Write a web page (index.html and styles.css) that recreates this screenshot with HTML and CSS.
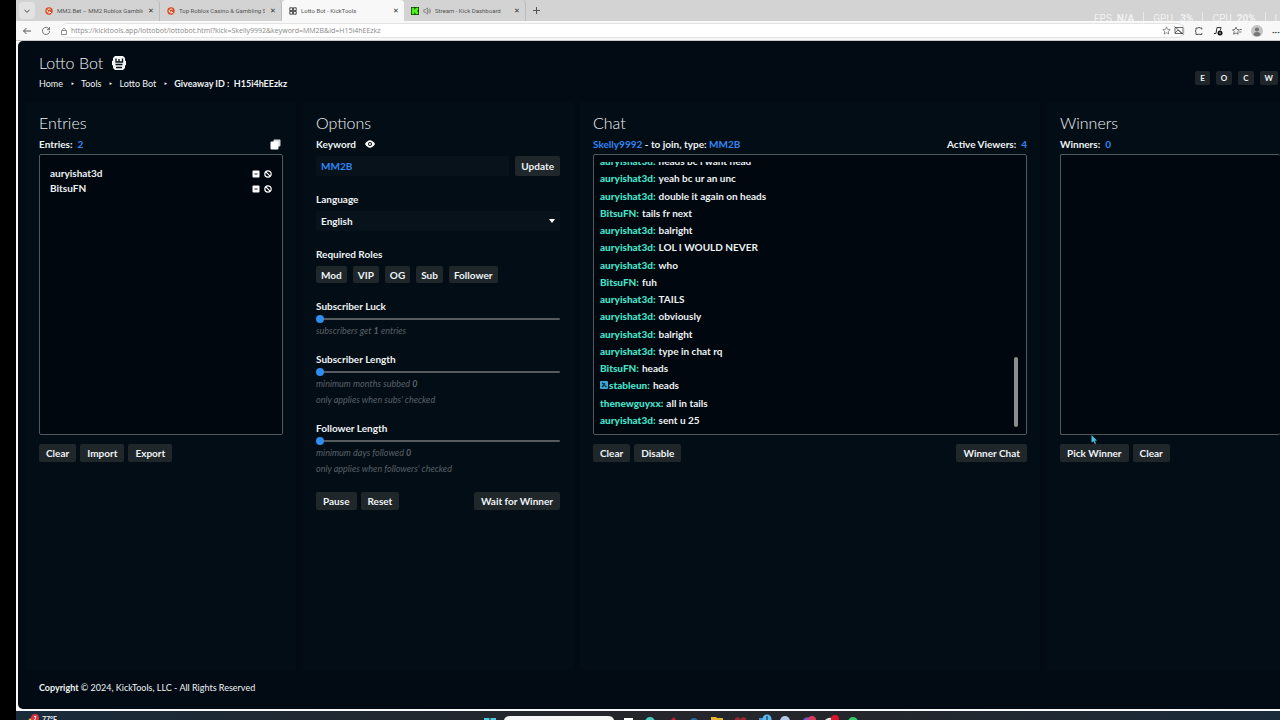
FILE: index.html
```html
<!DOCTYPE html>
<html lang="en">
<head>
    <meta charset="UTF-8">
    <meta name="viewport" content="width=device-width, initial-scale=1.0">
    <title>Lotto Bot - KickTools</title>
    <link rel="stylesheet" href="styles.css">
</head>
<body>

<div class="browser">
    <!-- Tabs -->
    <div class="tabs">
        <button class="tab-menu" aria-label="Tab menu"><svg width="8" height="8" viewBox="0 0 8 8"><path d="M1.5 3 4 5.3 6.5 3" fill="none" stroke="#444"/></svg></button>
        <div class="tab">
            <svg class="favicon" viewBox="0 0 10 10"><circle cx="5" cy="5" r="4.6" fill="#d8481e"/><path d="M7 3.4A2.4 2.4 0 1 0 6.5 7L5 5.2M6 6l2 2" fill="none" stroke="#fff" stroke-width="1.2"/></svg>
            <span class="tab-title">MM2.Bet – MM2 Roblox Gambling</span>
            <button class="tab-close" aria-label="Close">✕</button>
        </div>
        <div class="tab">
            <svg class="favicon" viewBox="0 0 10 10"><circle cx="5" cy="5" r="4.6" fill="#d8481e"/><path d="M7 3.4A2.4 2.4 0 1 0 6.5 7L5 5.2M6 6l2 2" fill="none" stroke="#fff" stroke-width="1.2"/></svg>
            <span class="tab-title">Top Roblox Casino &amp; Gambling Si</span>
            <button class="tab-close" aria-label="Close">✕</button>
        </div>
        <div class="tab active">
            <svg class="favicon" viewBox="0 0 10 10"><path d="M1 1h3.5v3.500H1zM5.500 1H9v3.500H5.500zM1 5.500h3.500V9H1zM5.500 5.500H9V9H5.500z" fill="#fff" stroke="#222"/></svg>
            <span class="tab-title">Lotto Bot - KickTools</span>
            <button class="tab-close" aria-label="Close">✕</button>
        </div>
        <div class="tab">
            <svg class="favicon" viewBox="0 0 10 10"><path fill="#123d0b" d="M0 0h10v10H0z"/><path d="M1 1h3v2h1V2h1V1h3v3H8v2h1v3H6V8H5V7H4v2H1z" fill="#4cf51c"/></svg>
            <svg class="favicon" viewBox="0 0 10 10"><path d="M1 3.500h2L5.500 1v8L3 6.500H1zM7 3q1.500 2 0 4M8.300 1.800q2 3.200 0 6.400" fill="none" stroke="#555" stroke-width=".7"/></svg>
            <span class="tab-title">Stream - Kick Dashboard</span>
            <button class="tab-close" aria-label="Close">✕</button>
        </div>
        <button class="tab-new" aria-label="New tab"><svg width="9" height="9" viewBox="0 0 9 9"><path d="M4.500 1v7M1 4.500h7" stroke="#555"/></svg></button>
    </div>

    <!-- Address bar -->
    <div class="toolbar">
        <button aria-label="Back"><svg width="10" height="10" viewBox="0 0 10 10"><path d="M9 5H1.500M4.500 2l-3 3 3 3" fill="none" stroke="#555"/></svg></button>
        <button aria-label="Reload"><svg width="10" height="10" viewBox="0 0 10 10"><path d="M8.300 3.500A3.600 3.600 0 1 0 8.600 5M8.500 1.200v2.500H6" fill="none" stroke="#666" stroke-width=".9"/></svg></button>
        <div class="address">
            <svg width="8" height="8" viewBox="0 0 8 8"><path d="M1.500 3.500h5v4h-5zM2.700 3.500V2q1.300-2 2.600 0v1.500" fill="none" stroke="#777" stroke-width=".8"/></svg>
            <input type="text" class="url" aria-label="Address" value="https://kicktools.app/lottobot/lottobot.html?kick=Skelly9992&amp;keyword=MM2B&amp;id=H15i4hEEzkz">
            <svg width="9" height="9" viewBox="0 0 10 10"><path d="m5 1 1.200 2.700 2.900.300-2.200 2 .700 2.900L5 7.400 2.400 8.900l.700-2.900-2.200-2 2.900-.300z" fill="none" stroke="#555" stroke-width=".7"/></svg>
            <svg width="10" height="9" viewBox="0 0 10 9"><path d="M1 1.500h8v6H1zM1 7l3-3 4 3.500M.5.5l9 8" fill="none" stroke="#444" stroke-width=".8"/></svg>
        </div>
        <svg class="tool" viewBox="0 0 10 10"><path d="M7.800 3.500V2H6Q5 .5 4 2H2v2Q.5 5 2 6v2.500h2q1-1 2 0h1.800V7" fill="none" stroke="#444" stroke-width=".9"/></svg>
        <svg class="tool" viewBox="0 0 10 10"><path d="M3 7.500 4 1.500h4L7.500 4M1 7.500h2" fill="none" stroke="#333"/><circle cx="7" cy="7" r="2.500" fill="#111"/><circle cx="7" cy="7" r=".7" fill="#fff"/></svg>
        <svg class="tool" viewBox="0 0 10 10"><path d="m4 1 1 2.500 2.500.300L5.700 5.500l.5 2.700L4 7 1.700 8.200l.5-2.700L.5 3.800 3 3.500zM7 6h2.500M8 3.500h2" fill="none" stroke="#555" stroke-width=".8"/></svg>
        <svg class="avatar" viewBox="0 0 12 12"><circle cx="6" cy="6" r="6" fill="#c4c4c4"/><circle cx="6" cy="4.500" r="2.100" fill="#777"/><path d="M2.500 10q0-3 3.500-3t3.500 3Q6 12.500 2.500 10z" fill="#777"/></svg>
        <span class="more">···</span>
    </div>

    <div class="stats"><span>FPS &nbsp;<b>N/A</b></span><span>GPU &nbsp; <b>3%</b></span><span>CPU &nbsp;<b>20%</b></span><span>L</span></div>

    <!-- Page -->
    <div class="page">
        <header class="header">
            <div>
                <h1>Lotto Bot
                    <svg width="14" height="14" viewBox="0 0 14 14"><path d="M3 0h8l2 2v2.500l1 .5v4l-1 .5V12l-2 2H3l-2-2V9.500L0 9V5l1-.5V2z" fill="#f4f6f7"/><path d="M4 2.500v3.500h6.500V2.500M7 3v3M3.500 8.500h7M4 11.500h6" fill="none" stroke="#07111a" stroke-width="1.300"/></svg>
                </h1>
                <nav class="crumbs">
                    <a href="#">Home</a><i>‣</i><a href="#">Tools</a><i>‣</i><a href="#">Lotto Bot</a><i>‣</i><b>Giveaway ID : &nbsp;H15i4hEEzkz</b>
                </nav>
            </div>
            <div class="shortcuts">
                <button>E</button><button>O</button><button>C</button><button>W</button>
            </div>
        </header>

        <main class="panels">
            <section class="panel">
                <h2>Entries</h2>
                <div class="bar">
                    <span>Entries: <span class="blue">&nbsp;2</span></span>
                    <button class="icon-btn" aria-label="Copy entries"><svg width="11" height="11" viewBox="0 0 11 11"><path d="M4.500.5h5q1 0 1 1v5q0 1-1 1h-5q-1 0-1-1v-5q0-1 1-1z" fill="#d5dadd"/><path d="M1.500 2.500h6q1 0 1 1v6q0 1-1 1h-6q-1 0-1-1v-6q0-1 1-1z" fill="#fff"/></svg></button>
                </div>
                <ul class="box entries">
                    <li><span>auryishat3d</span>
                        <button class="icon-btn" aria-label="Remove"><svg width="8" height="8" viewBox="0 0 8 8"><rect x=".5" y=".5" width="7" height="7" rx="1" fill="#fff"/><path d="M2.500 4h3" stroke="#223"/></svg></button>
                        <button class="icon-btn" aria-label="Ban"><svg width="8" height="8" viewBox="0 0 8 8"><circle cx="4" cy="4" r="3.200" fill="none" stroke="#fff" stroke-width="1.200"/><path d="m1.800 1.800 4.400 4.400" stroke="#fff" stroke-width="1.200"/></svg></button>
                    </li>
                    <li><span>BitsuFN</span>
                        <button class="icon-btn" aria-label="Remove"><svg width="8" height="8" viewBox="0 0 8 8"><rect x=".5" y=".5" width="7" height="7" rx="1" fill="#fff"/><path d="M2.500 4h3" stroke="#223"/></svg></button>
                        <button class="icon-btn" aria-label="Ban"><svg width="8" height="8" viewBox="0 0 8 8"><circle cx="4" cy="4" r="3.200" fill="none" stroke="#fff" stroke-width="1.200"/><path d="m1.800 1.800 4.400 4.400" stroke="#fff" stroke-width="1.200"/></svg></button>
                    </li>
                </ul>
                <div class="actions">
                    <button class="btn">Clear</button>
                    <button class="btn">Import</button>
                    <button class="btn">Export</button>
                </div>
            </section>

            <section class="panel">
                <h2>Options</h2>
                <div class="group">
                    <div class="keyword-label">
                        <label for="keyword">Keyword</label>
                        <svg width="10" height="8" viewBox="0 0 10 8"><path d="M0 4q5-7.500 10 0-5 7.500-10 0z" fill="#fff"/><circle cx="5" cy="4" r="2" fill="#08121a"/><circle cx="5" cy="4" r="1" fill="#fff"/></svg>
                    </div>
                    <div class="row">
                        <input type="text" class="field blue" id="keyword" value="MM2B">
                        <button class="btn update">Update</button>
                    </div>
                </div>
                <div class="group">
                    <label for="language">Language</label>
                    <div class="select-wrap">
                        <select class="field" id="language"><option>English</option></select>
                        <svg width="6" height="4" viewBox="0 0 6 4"><path d="M0 0h6L3 4z" fill="#fff"/></svg>
                    </div>
                </div>
                <div class="group">
                    <span class="label">Required Roles</span>
                    <div class="roles">
                        <button class="btn">Mod</button>
                        <button class="btn">VIP</button>
                        <button class="btn">OG</button>
                        <button class="btn">Sub</button>
                        <button class="btn">Follower</button>
                    </div>
                </div>
                <div class="slider-group">
                    <label for="luck">Subscriber Luck</label>
                    <input type="range" id="luck" min="1" max="10" value="1">
                    <p>subscribers get <b>1</b> entries</p>
                </div>
                <div class="slider-group">
                    <label for="sublen">Subscriber Length</label>
                    <input type="range" id="sublen" min="0" max="12" value="0">
                    <p>minimum months subbed <b>0</b></p>
                    <p>only applies when subs' checked</p>
                </div>
                <div class="slider-group">
                    <label for="follen">Follower Length</label>
                    <input type="range" id="follen" min="0" max="12" value="0">
                    <p>minimum days followed <b>0</b></p>
                    <p>only applies when followers' checked</p>
                </div>
                <div class="actions">
                    <button class="btn">Pause</button>
                    <button class="btn">Reset</button>
                    <button class="btn right">Wait for Winner</button>
                </div>
            </section>

            <section class="panel">
                <h2>Chat</h2>
                <div class="bar">
                    <span><span class="blue">Skelly9992</span> - to join, type: <span class="blue">MM2B</span></span>
                    <span>Active Viewers: <span class="blue">&nbsp;4</span></span>
                </div>
                <div class="box chat">
                    <div class="chat-view">
                        <ul class="messages">
                            <li><b>auryishat3d:</b> heads bc i want head</li>
                            <li><b>auryishat3d:</b> yeah bc ur an unc</li>
                            <li><b>auryishat3d:</b> double it again on heads</li>
                            <li><b>BitsuFN:</b> tails fr next</li>
                            <li><b>auryishat3d:</b> balright</li>
                            <li><b>auryishat3d:</b> LOL I WOULD NEVER</li>
                            <li><b>auryishat3d:</b> who</li>
                            <li><b>BitsuFN:</b> fuh</li>
                            <li><b>auryishat3d:</b> TAILS</li>
                            <li><b>auryishat3d:</b> obviously</li>
                            <li><b>auryishat3d:</b> balright</li>
                            <li><b>auryishat3d:</b> type in chat rq</li>
                            <li><b>BitsuFN:</b> heads</li>
                            <li><svg width="8" height="8" viewBox="0 0 8 8"><rect width="8" height="8" rx="1" fill="#3aa5cf"/><path d="M2 2l3 1.500M5 2.500 2 6M4.500 4.500 6.500 6" stroke="#06263c" stroke-width="1.200"/></svg><b>stableun:</b> heads</li>
                            <li><b>thenewguyxx:</b> all in tails</li>
                            <li><b>auryishat3d:</b> sent u 25</li>
                        </ul>
                    </div>
                    <div class="thumb"></div>
                </div>
                <div class="actions">
                    <button class="btn">Clear</button>
                    <button class="btn">Disable</button>
                    <button class="btn right">Winner Chat</button>
                </div>
            </section>

            <section class="panel last">
                <h2>Winners</h2>
                <div class="bar"><span>Winners: <span class="blue">&nbsp;0</span></span></div>
                <div class="box"></div>
                <div class="actions">
                    <button class="btn">Pick Winner</button>
                    <button class="btn">Clear</button>
                </div>
                <svg class="cursor" width="6" height="9" viewBox="0 0 6 9"><path d="M.5 0 6 5.500 3.800 5.700 5 8.500 3.800 9 2.600 6.200.5 7.500z" fill="#3fc3e0"/></svg>
            </section>
        </main>

        <footer class="footer"><b>Copyright</b> © 2024, KickTools, LLC - All Rights Reserved</footer>
    </div>

    <!-- Taskbar -->
    <div class="taskbar">
        <div class="weather"><svg width="14" height="8" viewBox="0 0 14 8"><circle cx="5" cy="8" r="4" fill="#e8b93c"/><circle cx="8" cy="4" r="4" fill="#d9343f"/><path d="M7 2.500h2L8 4q2 1-1 2" fill="none" stroke="#fff" stroke-width=".8"/></svg><span>77°F</span></div>
        <svg class="apps" width="376" height="8" viewBox="0 0 376 8">
            <path d="M0 6h5.500v2H0zM6.500 6H12v2H6.500z" fill="#4cc8dc"/>
            <path d="M20 8q1-4 6-4h98q5 0 6 4z" fill="#f4f6f5"/>
            <path d="M140 6h9v2h-9z" fill="#fff"/>
            <circle cx="166" cy="10" r="5" fill="#45c9bd"/>
            <path d="m187 8 3-3 2 3z" fill="#c5212c"/>
            <circle cx="210" cy="10" r="4" fill="#2b68a5"/>
            <path d="M227 8V5h5l1 1h6v2z" fill="#e6b32f"/>
            <path d="M251 8V6l3-1 2 2 3-2 3 1v2z" fill="#9b2634"/>
            <path d="M275 6h10v2h-10z" fill="#4f91c4"/><circle cx="283" cy="7" r="4.500" fill="#57b9ee"/><path d="M283 4v4" stroke="#124"/>
            <circle cx="301" cy="9" r="5" fill="#b4c5e8"/>
            <path d="M319 8q2-4 7-2v2z" fill="#7856c7"/><circle cx="328" cy="8" r="4" fill="#d83c5c"/>
            <path d="M341 8q3-3 7-2v2z" fill="#ddd"/><circle cx="351" cy="7" r="4" fill="#d91529"/>
            <circle cx="369" cy="10" r="5" fill="#31c96a"/>
        </svg>
    </div>
</div>

</body>
</html>
```
FILE: styles.css
```css
* {
    box-sizing: border-box;
}
body {
    margin: 0;
    background: #000;
    font-family: Lato, "Open Sans", sans-serif;
    font-size: 10px;
    line-height: 14px;
    color: #eef2f4;
    overflow: hidden;
}
button, input, select {
    font: inherit;
    color: inherit;
    border: none;
    margin: 0;
    padding: 0;
    background: none;
}
svg {
    display: block;
    flex: none;
}
ul, p, h1, h2 {
    margin: 0;
    padding: 0;
    list-style: none;
}
a {
    color: inherit;
    text-decoration: none;
}
.browser {
    position: relative;
    display: flex;
    flex-direction: column;
    height: 100vh;
    margin-left: 16px;
    background: #fafafa;
}

/* Browser bars */
.tabs {
    display: flex;
    height: 21px;
    background: #d3d3d3;
    font-family: Roboto, sans-serif;
    font-size: 6px;
    color: #555;
}
.tab-menu {
    display: grid;
    place-items: center;
    width: 16px;
    height: 17px;
    margin: 2px 3px;
    border-radius: 4px;
    background: #e2e2e2;
}
.tab {
    display: flex;
    align-items: center;
    gap: 4px;
    width: 122px;
    padding: 0 4px 0 7px;
    border-right: 1px solid #bbb;
    border-radius: 4px 4px 0 0;
}
.tab.active {
    background: #f8f8f8;
    border-right: none;
}
.favicon {
    width: 8px;
    height: 8px;
}
.tab-title {
    flex: 1;
    overflow: hidden;
    white-space: nowrap;
}
.tab-close {
    width: 8px;
    font-family: "DejaVu Sans", sans-serif;
    font-size: 7px;
    color: #333;
}
.tab-new {
    padding: 0 6px;
}
.toolbar {
    display: flex;
    align-items: center;
    gap: 9px;
    height: 20px;
    padding: 0 0 0 6px;
    border-bottom: 1px solid #c9c9c9;
    background: #f8f8f8;
    color: #888;
}
.address {
    display: flex;
    flex: 1;
    align-items: center;
    gap: 3px;
    height: 15px;
    border: 1px solid #e3e3e3;
    border-left: none;
    border-radius: 8px;
    background: #fff;
}
.url {
    flex: 1;
    font-family: "Open Sans", sans-serif;
    font-size: 7px;
}
.tool {
    width: 10px;
    height: 10px;
}
.avatar {
    width: 12px;
    height: 12px;
}
.more {
    width: 8px;
    overflow: hidden;
    color: #333;
}
.stats {
    position: absolute;
    top: 12px;
    right: 0;
    display: flex;
    font-family: Roboto, sans-serif;
    color: rgba(255, 255, 255, 0.7);
}
.stats span {
    padding: 0 9px;
    border-left: 1px solid rgba(255, 255, 255, 0.5);
}
.stats span:first-child {
    border-left: none;
}
.stats span:last-child {
    padding-right: 0;
}

/* Page */
.page {
    display: flex;
    flex-direction: column;
    flex: 1;
    min-height: 0;
    margin: 0 0 2px 2px;
    padding-left: 8px;
    border-radius: 5px 0 0 5px;
    background: #020b13;
}
.header {
    display: flex;
    justify-content: space-between;
    padding: 12px 2px 10px 13px;
}
h1 {
    display: flex;
    align-items: center;
    gap: 9px;
    font-size: 16px;
    font-weight: 300;
    line-height: 20px;
}
.crumbs {
    display: flex;
    margin-top: 3px;
    font-size: 9px;
    line-height: 16px;
}
.crumbs i {
    width: 18px;
    text-align: center;
    font-style: normal;
}
.shortcuts {
    display: flex;
    gap: 6px;
    margin-top: 18px;
}
.shortcuts button {
    height: 14px;
    padding: 0 5px;
    border-radius: 2px;
    background: #1f262b;
    font-size: 8px;
    font-weight: 700;
}
.panels {
    display: grid;
    grid-template-columns: 270fr 270fr 460fr 233fr;
    gap: 7px;
    flex: 1;
}
.panel {
    position: relative;
    min-width: 0;
    padding: 11px 13px;
    background: #030d15;
    font-weight: 700;
}
.panel.last {
    padding-right: 0;
}
h2 {
    margin-bottom: 4px;
    font-size: 16px;
    font-weight: 300;
    line-height: 20px;
}
.bar {
    display: flex;
    justify-content: space-between;
    margin-bottom: 3px;
}
.bar .icon-btn {
    padding: 0 2px;
}
.blue {
    color: #2f86f5;
}
.box {
    height: 281px;
    border: 1px solid #51585d;
    border-radius: 2px;
    background: #00070e;
}
.last .box {
    border-right: none;
}
.entries {
    padding: 11px 10px;
}
.entries li {
    display: flex;
    align-items: center;
    gap: 4px;
    line-height: 15px;
}
.entries span {
    flex: 1;
}
.chat {
    display: flex;
    align-items: flex-end;
    padding: 7px 8px 7px 6px;
}
.chat-view {
    display: flex;
    flex: 1;
    flex-direction: column;
    justify-content: flex-end;
    height: 265px;
    overflow: hidden;
}
.messages {
    display: flex;
    flex: none;
    flex-direction: column;
    justify-content: space-between;
    height: 273px;
}
.messages li {
    display: flex;
    align-items: center;
    gap: 3px;
}
.messages svg {
    margin-right: -2px;
}
.messages b {
    color: #46e0c8;
}
.thumb {
    width: 4px;
    height: 70px;
    border-radius: 2px;
    background: #8c8c8c;
}
.actions {
    display: flex;
    gap: 4px;
    margin-top: 9px;
}
.btn {
    height: 18px;
    padding: 0 7px;
    border-radius: 2px;
    background: #20272b;
    font-size: 10px;
    white-space: nowrap;
}
.right {
    margin-left: auto;
}
.cursor {
    position: absolute;
    top: 333px;
    left: 44px;
}

/* Options */
.group {
    margin-bottom: 16px;
}
.group label, .label, .slider-group label {
    display: block;
}
.keyword-label {
    display: flex;
    align-items: center;
    gap: 9px;
}
.row, .roles {
    display: flex;
    gap: 6px;
    margin-top: 5px;
}
.roles .btn {
    height: 17px;
    padding: 0 5px;
}
.field {
    flex: 1;
    width: 100%;
    min-width: 0;
    height: 20px;
    padding: 0 5px;
    border-radius: 2px;
    background: #07121a;
    appearance: none;
}
.row .update {
    height: 20px;
    padding: 0 6px;
}
.select-wrap {
    position: relative;
    margin-top: 5px;
}
.select-wrap svg {
    position: absolute;
    top: 8px;
    right: 5px;
}
.slider-group {
    margin-bottom: 13px;
}
.slider-group input {
    display: block;
    width: 100%;
    height: 8px;
    margin: 2px 0 0;
    appearance: none;
}
.slider-group input::-webkit-slider-runnable-track {
    height: 2px;
    border-radius: 1px;
    background: #555b5f;
}
.slider-group input::-webkit-slider-thumb {
    width: 8px;
    height: 8px;
    margin-top: -3px;
    border-radius: 50%;
    background: #2f8cf0;
    appearance: none;
}
.slider-group p {
    font-size: 9px;
    font-style: italic;
    font-weight: 400;
    line-height: 16px;
    color: #586067;
}
.slider-group ~ .actions {
    margin-top: 15px;
}
.footer {
    padding: 11px 13px 14px;
    font-size: 9px;
}

/* Taskbar */
.taskbar {
    display: flex;
    position: relative;
    justify-content: center;
    height: 9px;
    padding: 1px 0 0 48px;
    overflow: hidden;
    background: linear-gradient(90deg, #1a2b3b, #24262b 45%, #24262b 65%, #1a2b3b);
}
.weather {
    position: absolute;
    top: 3px;
    left: 11px;
    display: flex;
    gap: 1px;
    font-size: 7px;
    font-weight: 700;
    line-height: 10px;
}
```
